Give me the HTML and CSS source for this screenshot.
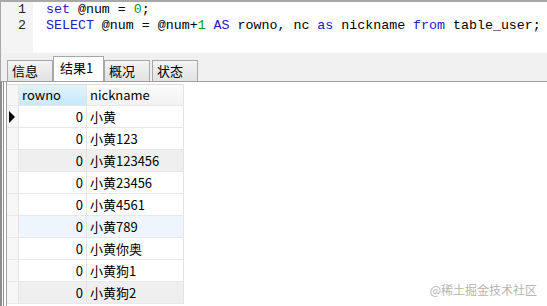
FILE: index.html
```html
<!DOCTYPE html>
<html>
<head>
  <meta charset="UTF-8">
  <title>查询结果</title>
  <link rel="stylesheet" href="styles.css">
</head>
<body>

  <div class="editor">
    <div class="gutter">
      <div>1</div>
      <div>2</div>
    </div>
    <div class="code">
      <div class="line"><span class="kw">set</span> @num = <span class="num">0</span>;</div>
      <div class="line"><span class="kw">SELECT</span> @num = @num+<span class="num">1</span> <span class="kw">AS</span> rowno, nc <span class="kw">as</span> nickname <span class="kw">from</span> table_user;</div>
    </div>
  </div>

  <div class="tabbar">
    <div class="tab">信息</div>
    <div class="tab active">结果1</div>
    <div class="tab">概况</div>
    <div class="tab gap">状态</div>
  </div>

  <div class="frame">
    <div class="frame-inner">
      <div class="grid">
        <div class="row head">
          <div class="rh"></div>
          <div class="cell sel">rowno</div>
          <div class="cell">nickname</div>
        </div>
        <div class="row">
          <div class="rh"><span class="arrow"></span></div>
          <div class="cell num">0</div>
          <div class="cell">小黄</div>
        </div>
        <div class="row">
          <div class="rh"></div>
          <div class="cell num">0</div>
          <div class="cell">小黄123</div>
        </div>
        <div class="row grey">
          <div class="rh"></div>
          <div class="cell num">0</div>
          <div class="cell">小黄123456</div>
        </div>
        <div class="row">
          <div class="rh"></div>
          <div class="cell num">0</div>
          <div class="cell">小黄23456</div>
        </div>
        <div class="row">
          <div class="rh"></div>
          <div class="cell num">0</div>
          <div class="cell">小黄4561</div>
        </div>
        <div class="row hover">
          <div class="rh"></div>
          <div class="cell num">0</div>
          <div class="cell">小黄789</div>
        </div>
        <div class="row">
          <div class="rh"></div>
          <div class="cell num">0</div>
          <div class="cell">小黄你奥</div>
        </div>
        <div class="row">
          <div class="rh"></div>
          <div class="cell num">0</div>
          <div class="cell">小黄狗1</div>
        </div>
        <div class="row grey">
          <div class="rh"></div>
          <div class="cell num">0</div>
          <div class="cell">小黄狗2</div>
        </div>
      </div>
    </div>
  </div>

  <div class="mark">@稀土掘金技术社区</div>

</body>
</html>
```

FILE: styles.css
```css
body {
  margin: 0;
  padding: 0;
  width: 547px;
  height: 306px;
  overflow: hidden;
  position: relative;
  background-color: #fff;
  font-family: "Noto Sans CJK SC", "Noto Sans", sans-serif;
  font-size: 13px;
  color: #000;
}
*, *:before, *:after {
  box-sizing: border-box;
}

/* sql editor */
.editor {
  display: flex;
  height: 53px;
  border-top: 2px solid #a8a8a8;
  border-left: 1px solid #a8a8a8;
  font-family: "Liberation Mono", monospace;
  font-size: 13.3px;
  line-height: 16px;
}
.gutter {
  width: 32px;
  padding-right: 7px;
  text-align: right;
  background-color: #f4f4f4;
  color: #222;
}
.code {
  padding-left: 13px;
  color: #000;
}
.line {
  white-space: pre;
}
.kw {
  color: #2020c0;
}
.num {
  color: #109010;
}

/* result tabs */
.tabbar {
  display: flex;
  align-items: flex-end;
  height: 28px;
  padding-left: 6px;
  background-color: #f0f0f0;
  border-left: 1px solid #a8a8a8;
}
.tab {
  height: 21px;
  width: 46px;
  padding-left: 4px;
  line-height: 19px;
  border: 1px solid #a8a8a8;
  border-bottom: none;
  background: linear-gradient(#f4f4f4, #e2e2e2);
  color: #000;
}
.tab.active {
  height: 25px;
  width: 51px;
  padding-left: 6px;
  line-height: 22px;
  background: #fff;
}
.tab.gap {
  margin-left: 2px;
}

/* data grid */
.frame {
  height: 225px;
  border-top: 1px solid #a0a0a0;
  border-left: 2px solid #8c8c8c;
  padding-left: 1px;
}
.frame-inner {
  height: 100%;
  border-left: 1px solid #8c8c8c;
  padding-left: 2px;
}
.grid {
  height: 100%;
  border-left: 1px solid #a0a0a0;
  padding-top: 2px;
}
.row {
  display: flex;
  height: 22px;
}
.rh {
  width: 12px;
  border-right: 1px solid #e4e4e4;
  border-bottom: 1px solid #e8e8e8;
  background-color: #f7f7f7;
  position: relative;
}
.arrow {
  position: absolute;
  top: 5px;
  left: 2px;
  width: 0;
  height: 0;
  border-top: 6px solid transparent;
  border-bottom: 6px solid transparent;
  border-left: 6px solid #000;
}
.cell {
  width: 97px;
  padding-left: 3px;
  line-height: 21px;
  border-right: 1px solid #e4e4e4;
  border-bottom: 1px solid #e8e8e8;
  white-space: nowrap;
}
.cell.num {
  width: 68px;
  padding-left: 0;
  padding-right: 3px;
  text-align: right;
  color: #000;
}
.head .rh {
  background-color: #f6f6f6;
  border-top: 1px solid #dcdcdc;
}
.head .cell {
  border-top: 1px solid #dcdcdc;
  background: linear-gradient(#fcfcfc, #f2f2f2);
  line-height: 20px;
}
.head .cell.sel {
  width: 68px;
  background: linear-gradient(#e2f3fc, #c9e9f9);
}
.row.grey .cell {
  background-color: #efefef;
}
.row.hover .cell {
  background-color: #eef5fd;
}

.mark {
  position: absolute;
  right: 10px;
  bottom: 8px;
  font-size: 12px;
  color: #b4b4b4;
}
```
